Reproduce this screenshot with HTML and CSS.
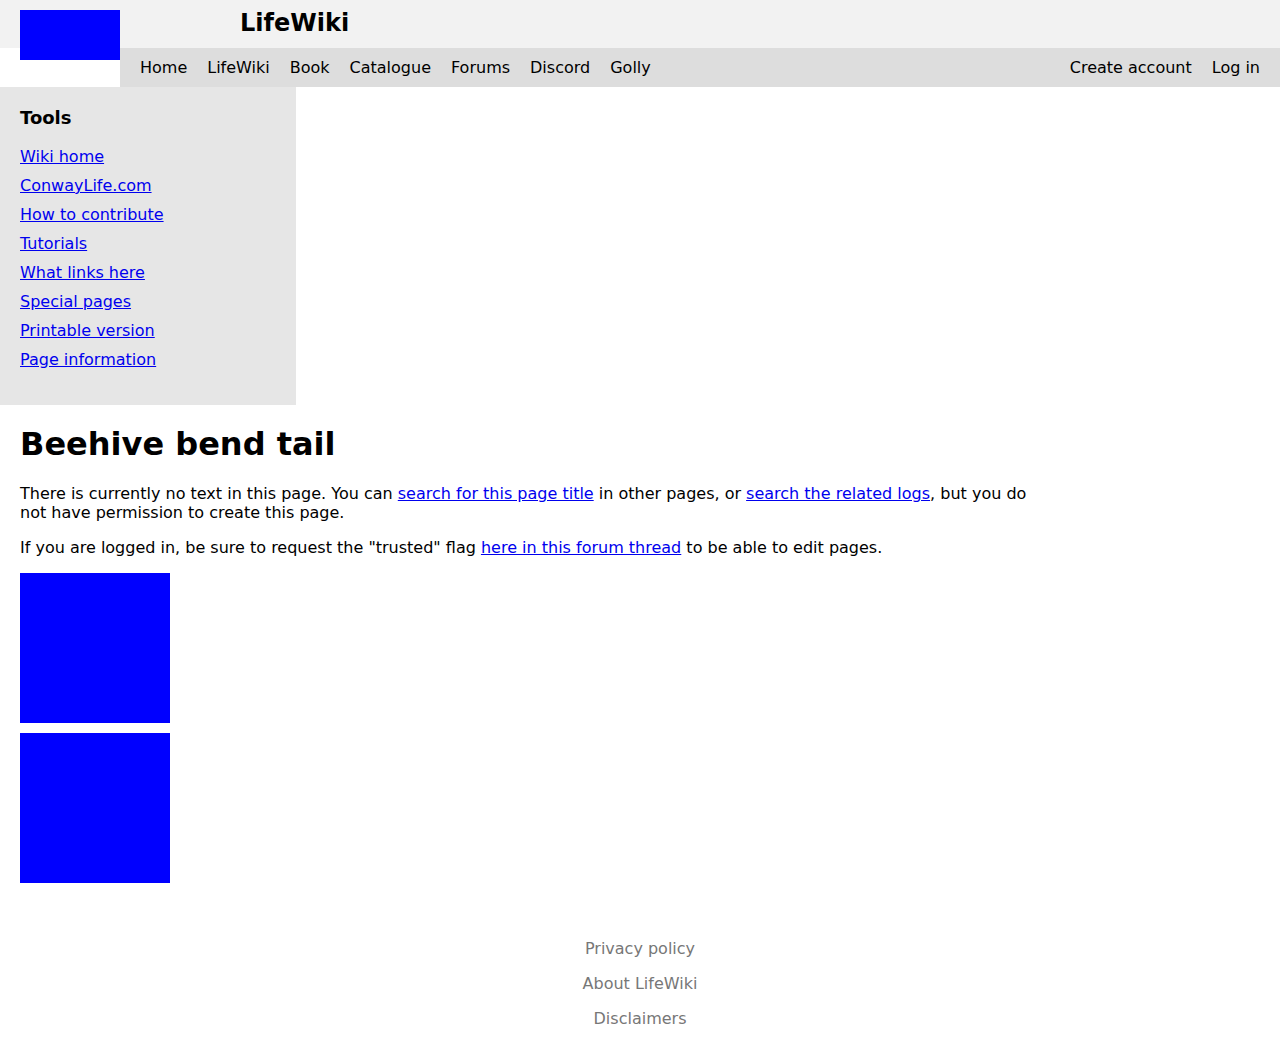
FILE: index.html
```html
<!DOCTYPE html>
<html lang="en">
<head>
<meta charset="utf-8">
<title>Beehive bend tail - LifeWiki</title>
<link rel="stylesheet" href="styles.css">
</head>
<body>
<header class="header">
  <div class="topbar">
    <div class="logo"></div>
    <div class="site-title">LifeWiki</div>
  </div>
  <nav class="navbar">
    <ul class="nav-left">
      <li>Home</li>
      <li>LifeWiki</li>
      <li>Book</li>
      <li>Catalogue</li>
      <li>Forums</li>
      <li>Discord</li>
      <li>Golly</li>
    </ul>
    <ul class="nav-right">
      <li>Create account</li>
      <li>Log in</li>
    </ul>
  </nav>
</header>
<aside class="sidebar">
  <h3 class="sidebar-title">Tools</h3>
  <ul class="tools">
    <li><a href="#">Wiki home</a></li>
    <li><a href="#">ConwayLife.com</a></li>
    <li><a href="#">How to contribute</a></li>
    <li><a href="#">Tutorials</a></li>
    <li><a href="#">What links here</a></li>
    <li><a href="#">Special pages</a></li>
    <li><a href="#">Printable version</a></li>
    <li><a href="#">Page information</a></li>
  </ul>
</aside>
<main class="content">
  <h1 class="page-title">Beehive bend tail</h1>
  <p>There is currently no text in this page. You can <a href="#">search for this page title</a> in other pages, or <a href="#">search the related logs</a>, but you do not have permission to create this page.</p>
  <p>If you are logged in, be sure to request the "trusted" flag <a href="#">here in this forum thread</a> to be able to edit pages.</p>
  <div class="pictures">
    <div class="picture"></div>
    <div class="picture"></div>
  </div>
</main>
<footer class="footer">
  <div>Privacy policy</div>
  <div>About LifeWiki</div>
  <div>Disclaimers</div>
</footer>
</body>
</html>
```
FILE: styles.css
```css
html, body {
  margin: 0;
  padding: 0;
}
body {
  font-family: "DejaVu Sans", sans-serif;
  font-size: 16px;
  line-height: 19px;
  color: #000;
  background: #fff;
}
a {
  color: #0000ee;
  text-decoration: underline;
}
ul {
  list-style: none;
  margin: 0;
  padding: 0;
}
.topbar {
  display: flex;
  align-items: flex-start;
  height: 48px;
  background: #f2f2f2;
  padding-left: 20px;
}
.logo {
  width: 100px;
  height: 50px;
  margin-top: 10px;
  background: #0000ff;
  flex-shrink: 0;
}
.site-title {
  margin-left: 120px;
  margin-top: 9px;
  font-size: 24px;
  line-height: 28px;
  font-weight: bold;
}
.navbar {
  display: flex;
  justify-content: space-between;
  margin-left: 120px;
  height: 39px;
  background: #dddddd;
  padding: 0 20px;
  align-items: center;
}
.nav-left, .nav-right {
  display: flex;
  gap: 20px;
}
.sidebar {
  width: 256px;
  background: #e6e6e6;
  padding: 20px 20px 36px;
}
.sidebar-title {
  margin: 0 0 19px;
  font-size: 18px;
  line-height: 21px;
  font-weight: bold;
}
.tools {
  display: flex;
  flex-direction: column;
  gap: 10px;
}
.content {
  max-width: 1020px;
  padding: 21px 20px 0;
}
.page-title {
  margin: 0 0 21px;
  font-size: 32px;
  line-height: 37px;
  font-weight: bold;
}
.content p {
  margin: 0 0 16px;
}
.pictures {
  display: flex;
  flex-direction: column;
  gap: 10px;
}
.picture {
  width: 150px;
  height: 150px;
  background: #0000ff;
}
.footer {
  display: flex;
  flex-direction: column;
  align-items: center;
  gap: 16px;
  color: #777777;
  padding: 56px 0 25px;
}
```
